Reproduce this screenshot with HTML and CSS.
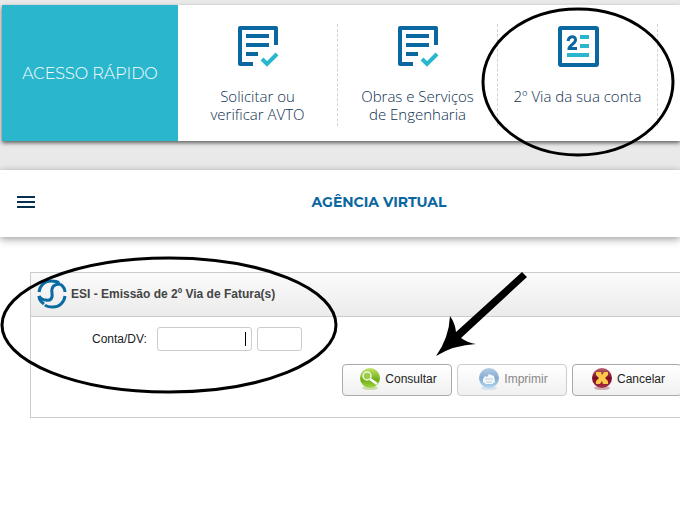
FILE: index.html
```html
<!DOCTYPE html>
<html lang="pt-BR">
<head>
    <meta charset="UTF-8">
    <title>Agência Virtual</title>
    <link rel="stylesheet" href="styles.css">
</head>
<body>
    <section class="quick-access">
        <div class="quick-bar">
            <h2 class="quick-title">ACESSO RÁPIDO</h2>
            <a class="quick-item" href="#">
                <svg width="42" height="42" viewBox="0 0 42 42" fill="none">
                    <path d="M16 39H3V3H39V20" stroke="#0a679f" stroke-width="4" stroke-linejoin="round"/>
                    <path d="M9 11H32M9 20H32M9 29H21" stroke="#0a679f" stroke-width="4"/>
                    <path d="M25 34L30 39L40 29" stroke="#2ab7cd" stroke-width="4"/>
                </svg>
                <span>Solicitar ou<br>verificar AVTO</span>
            </a>
            <a class="quick-item" href="#">
                <svg width="42" height="42" viewBox="0 0 42 42" fill="none">
                    <path d="M16 39H3V3H39V20" stroke="#0a679f" stroke-width="4" stroke-linejoin="round"/>
                    <path d="M9 11H32M9 20H32M9 29H21" stroke="#0a679f" stroke-width="4"/>
                    <path d="M25 34L30 39L40 29" stroke="#2ab7cd" stroke-width="4"/>
                </svg>
                <span>Obras e Serviços<br>de Engenharia</span>
            </a>
            <a class="quick-item" href="#">
                <svg width="42" height="42" viewBox="0 0 42 42" fill="none">
                    <rect x="3" y="3" width="37" height="37" rx="1" stroke="#0a679f" stroke-width="4"/>
                    <path d="M11 16C12 10.500 18.500 10.500 18.500 15C18.500 18.500 12 20.500 12 23.500H20" stroke="#0a679f" stroke-width="3"/>
                    <path d="M23 12H32M23 21H32M10 30H32" stroke="#2ab7cd" stroke-width="4"/>
                </svg>
                <span>2º Via da sua conta</span>
            </a>
        </div>
    </section>

    <header class="navbar">
        <button class="menu-btn" type="button" aria-label="Menu">
            <i></i><i></i><i></i>
        </button>
        <h1>AGÊNCIA VIRTUAL</h1>
    </header>

    <main>
        <form class="panel">
            <div class="panel-header">
                <svg width="30" height="30" viewBox="0 0 30 30" fill="none" stroke="#0a6ba3">
                    <path d="M2 13C3 6 8 2 14 2C17 2 20 2 22 4" stroke-width="3"/>
                    <path d="M28 17C27 24 22 28 16 28C13 28 10 28 8 26" stroke-width="3"/>
                    <path d="M23 5C26 7 28 10 28 13" stroke-width="3"/>
                    <path d="M7 25C4 23 2 20 2 17" stroke-width="3"/>
                    <path d="M23 5C17 5 14 8 15 14C16 20 13 22 9 21C6 21 4 20 2 17" stroke-width="3"/>
                </svg>
                <h2>ESI - Emissão de 2º Via de Fatura(s)</h2>
            </div>
            <div class="form-group">
                <label for="conta">Conta/DV:</label>
                <div class="field">
                    <input type="text" id="conta" class="input-conta">
                    <span class="caret"></span>
                </div>
                <input type="text" class="input-dv" aria-label="DV">
            </div>
            <div class="actions">
                <button class="btn" type="button">
                    <svg width="22" height="24" viewBox="0 0 22 24">
                        <defs>
                            <linearGradient id="green" x2="0" y2="1">
                                <stop offset="0" stop-color="#c3e36c"/>
                                <stop offset="0.600" stop-color="#6fae16"/>
                                <stop offset="1" stop-color="#a4d640"/>
                            </linearGradient>
                        </defs>
                        <ellipse cx="11" cy="21" rx="8" ry="2" fill="#cbdcae"/>
                        <circle cx="11" cy="11" r="10" fill="url(#green)"/>
                        <circle cx="8" cy="9" r="4" fill="#9ccc4e" stroke="#f0f8dc" stroke-width="1.500"/>
                        <path d="M11 12L18 17" stroke="#fff" stroke-width="2.500"/>
                    </svg>
                    Consultar
                </button>
                <button class="btn" type="button" disabled>
                    <svg width="22" height="24" viewBox="0 0 22 24">
                        <defs>
                            <linearGradient id="blue" x2="0" y2="1">
                                <stop offset="0" stop-color="#b4cce4"/>
                                <stop offset="0.500" stop-color="#85acd2"/>
                                <stop offset="1" stop-color="#b0d5ee"/>
                            </linearGradient>
                        </defs>
                        <ellipse cx="11" cy="21" rx="8" ry="2" fill="#d5e1eb"/>
                        <circle cx="11" cy="11" r="10" fill="url(#blue)"/>
                        <path d="M5 12L7 9L9 10L11 7L16 9L17 15L14 17H8L5 15Z" fill="#f5f8fa"/>
                        <path d="M7 12H15M8 15H14" stroke="#bccbd8"/>
                    </svg>
                    Imprimir
                </button>
                <button class="btn" type="button">
                    <svg width="22" height="24" viewBox="0 0 22 24">
                        <defs>
                            <linearGradient id="red" x2="0" y2="1">
                                <stop offset="0" stop-color="#b7616f"/>
                                <stop offset="0.500" stop-color="#7c0c20"/>
                                <stop offset="1" stop-color="#a63048"/>
                            </linearGradient>
                        </defs>
                        <ellipse cx="11" cy="21" rx="8" ry="2" fill="#cdaeb3"/>
                        <circle cx="11" cy="11" r="10" fill="url(#red)"/>
                        <path d="M5 5H10L11 8L13 5H17V8L14 11L17 14V17H12L11 14L9 17H5V14L8 11L5 8Z" fill="#ffc74a"/>
                    </svg>
                    Cancelar
                </button>
            </div>
        </form>
    </main>

    <!-- hand-drawn marks over the page -->
    <svg class="marks" width="680" height="510" viewBox="0 0 680 510" aria-hidden="true">
        <ellipse cx="578" cy="82" rx="95" ry="73"/>
        <ellipse cx="169" cy="325" rx="167" ry="67"/>
        <path d="M522 272L527 277L461 338Q468 343 476 344Q454 345 436 356Q449 338 450 316Q455 323 456 332Z"/>
    </svg>
</body>
</html>
```
FILE: styles.css
```css
* {
    margin: 0;
    padding: 0;
    box-sizing: border-box;
}

body {
    position: relative;
    min-height: 100vh;
    background: white;
    font-family: "Liberation Sans", Arial, sans-serif;
    font-size: 12px;
    color: #222;
    overflow: hidden;
}

.quick-access {
    background: #e9e9e9;
    padding: 5px 0 29px 2px;
}

.quick-bar {
    display: flex;
    height: 136px;
    background: white;
    box-shadow: 0 2px 4px rgba(0,0,0,0.6);
}

.quick-title {
    display: flex;
    align-items: center;
    justify-content: center;
    flex: 0 0 176px;
    background: #2ab7cd;
    color: white;
    font-family: Montserrat, Inter, sans-serif;
    font-size: 16px;
    font-weight: 300;
}

.quick-item {
    display: flex;
    flex-direction: column;
    align-items: center;
    gap: 20px;
    flex: 0 0 160px;
    height: 102px;
    margin-top: 19px;
    padding-top: 1px;
    border-right: 1px dashed #d2d2d2;
    font-family: "Open Sans", sans-serif;
    font-size: 15px;
    font-weight: 300;
    line-height: 18px;
    color: #0c2f50;
    text-align: center;
    text-decoration: none;
}

.quick-item svg {
    flex-shrink: 0;
}

.navbar {
    display: flex;
    align-items: center;
    height: 67px;
    padding: 0 17px 3px;
    background: white;
    box-shadow: 0 2px 8px rgba(0,0,0,0.4);
}

.menu-btn {
    display: flex;
    flex-direction: column;
    gap: 3px;
    width: 18px;
    border: none;
    background: none;
    cursor: pointer;
}

.menu-btn i {
    width: 18px;
    height: 2px;
    background: #06304f;
}

.navbar h1 {
    flex: 1;
    padding-left: 60px;
    font-family: Montserrat, Inter, sans-serif;
    font-size: 14px;
    font-weight: 700;
    color: #0a679f;
    text-align: center;
}

main {
    padding: 35px 0 0 30px;
}

.panel {
    height: 146px;
    border: 1px solid #ccc;
    border-right: none;
}

.panel-header {
    display: flex;
    align-items: center;
    gap: 4px;
    height: 44px;
    padding: 0 0 1px 6px;
    background: linear-gradient(#fbfbfb, #ebebeb);
    border-bottom: 1px solid #ccc;
}

.panel-header h2 {
    font-size: 12px;
    color: #444;
}

.form-group {
    display: flex;
    align-items: center;
    gap: 5px;
    padding: 10px 0 0 61px;
}

.form-group label {
    width: 60px;
}

.field {
    position: relative;
}

.form-group input {
    display: block;
    height: 24px;
    padding: 0 6px;
    border: 1px solid #ccc;
    border-radius: 3px;
    font: inherit;
    text-align: right;
}

.input-conta {
    width: 95px;
}

.input-dv {
    width: 45px;
}

.caret {
    position: absolute;
    top: 5px;
    right: 6px;
    width: 1px;
    height: 14px;
    background: #000;
}

.actions {
    display: flex;
    justify-content: flex-end;
    gap: 5px;
    margin: 13px -2px 0 0;
}

.btn {
    display: flex;
    align-items: center;
    justify-content: center;
    gap: 4px;
    width: 110px;
    height: 32px;
    padding: 0 0 2px 2px;
    border: 1px solid #aaa;
    border-radius: 4px;
    background: linear-gradient(#fff, #f0f0f0);
    font: inherit;
    color: #222;
    cursor: pointer;
}

.btn:disabled {
    border-color: #ccc;
    color: #888;
    cursor: default;
}

.marks {
    position: absolute;
    top: 0;
    left: 0;
    pointer-events: none;
}

.marks ellipse {
    fill: none;
    stroke: #000;
    stroke-width: 3;
}
```
